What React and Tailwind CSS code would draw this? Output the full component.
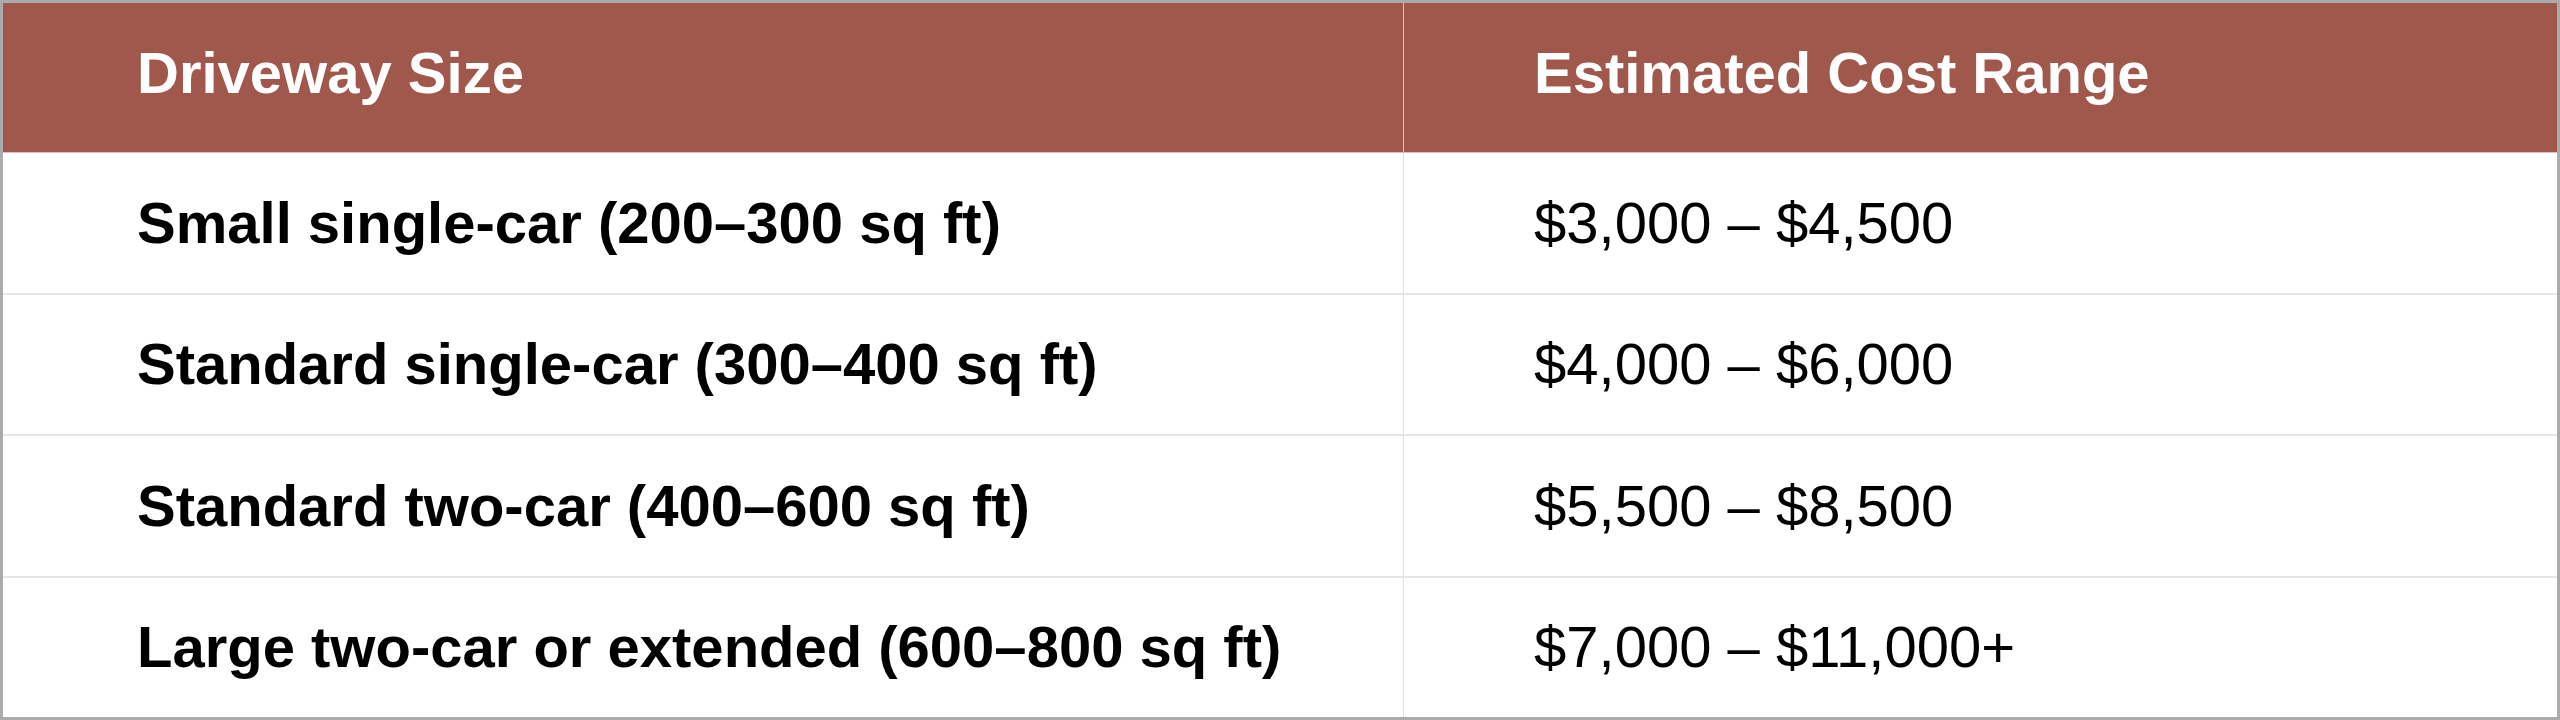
import React from "react";

const rows = [
    { size: "Small single-car (200–300 sq ft)", cost: "$3,000 – $4,500" },
    { size: "Standard single-car (300–400 sq ft)", cost: "$4,000 – $6,000" },
    { size: "Standard two-car (400–600 sq ft)", cost: "$5,500 – $8,500" },
    { size: "Large two-car or extended (600–800 sq ft)", cost: "$7,000 – $11,000+" },
];

const App = () => {
    return (
        <div className="w-[2560px] h-[720px] border-[3px] border-[#ababab] bg-white flex flex-col font-['Liberation_Sans',Arial,sans-serif] text-[58px] leading-none">
            {/* Kepala tabel */}
            <div className="flex h-[150px] shrink-0 bg-[#a0574c] text-white font-bold border-b border-[#d9c3bf]">
                <div className="w-[1401px] flex items-center pl-[134px] pb-[10px] border-r border-[#d8c0bb]">
                    Driveway Size
                </div>
                <div className="flex-1 flex items-center pl-[130px] pb-[10px]">
                    Estimated Cost Range
                </div>
            </div>

            {/* Baris data */}
            {rows.map((row, i) => (
                <div
                    key={i}
                    className={
                        "flex flex-1 text-black " +
                        (i < rows.length - 1 ? "border-b-2 border-[#e6e6e6]" : "")
                    }
                >
                    <div className="w-[1401px] flex items-center pl-[134px] font-bold border-r border-[#e0e0e0]">
                        {row.size}
                    </div>
                    <div className="flex-1 flex items-center pl-[130px]">
                        {row.cost}
                    </div>
                </div>
            ))}
        </div>
    );
};

export default App;
